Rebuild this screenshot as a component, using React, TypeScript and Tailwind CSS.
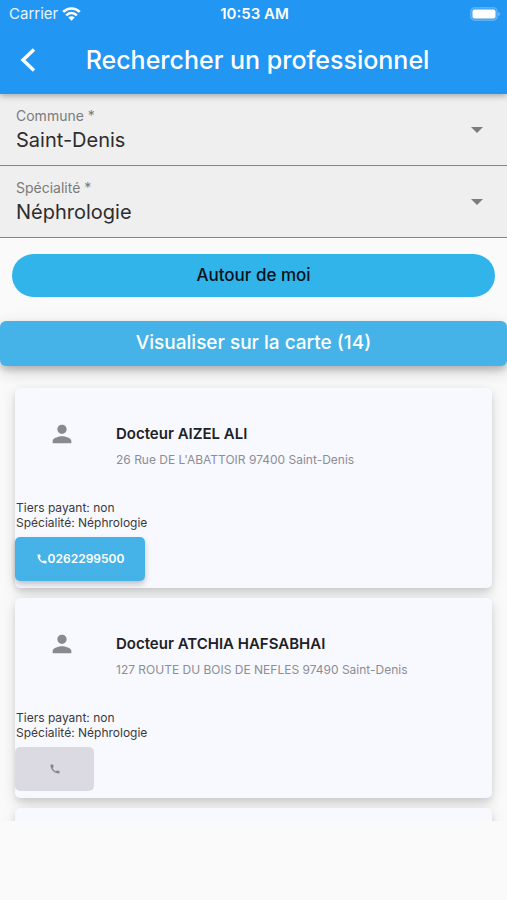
import { useId } from "react";
import { MdCall, MdPerson } from "react-icons/md";

type Doctor = { name: string; address: string; phone?: string };

const doctors: Doctor[] = [
  {
    name: "Docteur AIZEL ALI",
    address: "26 Rue DE L'ABATTOIR 97400 Saint-Denis",
    phone: "0262299500",
  },
  {
    name: "Docteur ATCHIA HAFSABHAI",
    address: "127 ROUTE DU BOIS DE NEFLES 97490 Saint-Denis",
  },
];

const cardClass =
  "h-[200px] shrink-0 rounded-[5px] bg-[#f8f9ff] shadow-[0_4px_6px_-1px_rgba(0,0,0,0.09),0_6px_12px_rgba(0,0,0,0.07),0_1px_18px_rgba(0,0,0,0.08)]";

function StatusBar() {
  return (
    <div className="grid h-7 grid-cols-3 items-center pr-[7px] pl-[9px] text-[15px] leading-5">
      <div className="flex items-center gap-1">
        <span className="text-white/90">Carrier</span>
        <svg width="19" height="14" viewBox="0 0 19 14" fill="none" stroke="white" aria-hidden="true">
          <path d="M1.2 4.9a11.8 11.8 0 0 1 16.6 0" strokeWidth="2.7" />
          <path d="M4.2 8.3a7.5 7.5 0 0 1 10.6 0" strokeWidth="2.5" />
          <path d="M9.5 13.8 6.3 10.6a4.5 4.5 0 0 1 6.4 0z" fill="white" stroke="none" />
        </svg>
      </div>
      <span className="text-center font-semibold whitespace-nowrap">10:53 AM</span>
      <svg className="justify-self-end" width="30" height="14" viewBox="0 0 30 14" aria-hidden="true">
        <rect x="0.7" y="0.7" width="26.6" height="12.6" rx="4" fill="white" fillOpacity="0.12" stroke="white" strokeOpacity="0.25" strokeWidth="1.2" />
        <rect x="2.5" y="2.5" width="23" height="9" rx="2" fill="white" />
        <path d="M28.5 5c1.6.6 1.6 3.4 0 4z" fill="white" fillOpacity="0.5" />
      </svg>
    </div>
  );
}

function SelectField({ label, value }: { label: string; value: string }) {
  const id = useId();
  return (
    <div className="grid h-[72px] border-b border-[#858585] bg-[#efefef]">
      <label
        htmlFor={id}
        className="pointer-events-none z-10 col-start-1 row-start-1 self-start px-4 pt-3 text-[14px] leading-5 text-[#7b7b7b]"
      >
        {label}
      </label>
      <select
        id={id}
        className="col-start-1 row-start-1 w-full appearance-none bg-transparent pt-5 pr-12 pl-4 text-[20px] leading-6 text-[#2d2d2d]"
      >
        <option>{value}</option>
      </select>
      <svg
        className="pointer-events-none col-start-1 row-start-1 mr-6 self-center justify-self-end"
        width="12"
        height="6"
        viewBox="0 0 12 6"
        aria-hidden="true"
      >
        <path d="M0 0h12L6 6z" fill="#7c7c7c" />
      </svg>
    </div>
  );
}

function DoctorCard({ doctor }: { doctor: Doctor }) {
  return (
    <article className={cardClass}>
      <div className="flex pt-8 pl-[33px]">
        <MdPerson className="size-7 shrink-0 text-[#8a8a8e]" aria-hidden="true" />
        <div className="pt-0.5 pl-10">
          <h2 className="text-[15px] leading-6 font-semibold text-[#202124]">{doctor.name}</h2>
          <p className="pt-1 text-[12px] leading-5 text-[#8d8d92]">{doctor.address}</p>
        </div>
      </div>
      <div className="pt-[30px] pl-px text-[12px] leading-[15px] text-[#3a3a3d]">
        <p>Tiers payant: non</p>
        <p>Spécialité: Néphrologie</p>
      </div>
      {doctor.phone ? (
        <button className="mt-[7px] flex h-11 w-[130px] items-center justify-center rounded-[5px] bg-[#45b3e8] text-[12px] font-semibold text-white shadow-[0_3px_5px_rgba(0,0,0,0.16),0_4px_8px_rgba(0,0,0,0.08)]">
          <MdCall className="size-3" aria-hidden="true" />
          {doctor.phone}
        </button>
      ) : (
        <button
          disabled
          aria-label="Appeler"
          className="mt-[7px] flex h-11 w-[79px] items-center justify-center rounded-[5px] bg-[#dbdae2] text-[#858489]"
        >
          <MdCall className="size-3" aria-hidden="true" />
        </button>
      )}
    </article>
  );
}

export default function App() {
  return (
    <div className="flex h-screen flex-col overflow-hidden bg-[#fafafa] font-['Inter','Liberation_Sans',sans-serif]">
      <header className="relative z-20 h-[94px] shrink-0 bg-[#2196f3] text-white shadow-[0_2px_6px_rgba(0,0,0,0.3)]">
        <StatusBar />
        <div className="grid h-16 grid-cols-[56px_1fr_48px] items-center">
          <button aria-label="Retour" className="flex h-12 items-center pl-5">
            <svg width="16" height="24" viewBox="0 0 16 24" fill="none" stroke="white" strokeWidth="3.4" aria-hidden="true">
              <path d="M14 1.5 3 12l11 10.5" />
            </svg>
          </button>
          <h1 className="text-center text-[25px] leading-8 font-medium whitespace-nowrap">
            Rechercher un professionnel
          </h1>
        </div>
      </header>
      <form className="flex shrink-0 flex-col">
        <SelectField label="Commune *" value="Saint-Denis" />
        <SelectField label="Spécialité *" value="Néphrologie" />
        <button
          type="button"
          className="mx-3 mt-4 h-[43px] rounded-full bg-[#31b4ea] text-[17px] font-medium text-[#071018]"
        >
          Autour de moi
        </button>
        <button
          type="button"
          className="mt-6 mb-[18px] h-[45px] rounded-md bg-[#45b3e8] text-[19px] font-medium text-white shadow-[0_4px_6px_rgba(0,0,0,0.18),0_6px_18px_rgba(0,0,0,0.16)]"
        >
          Visualiser sur la carte (14)
        </button>
      </form>
      <main className="relative flex min-h-0 flex-1 flex-col gap-[10px] overflow-hidden bg-[#fafafa] px-[15px] pt-1">
        {doctors.map((doctor) => (
          <DoctorCard key={doctor.name} doctor={doctor} />
        ))}
        <article className={cardClass} aria-hidden="true" />
      </main>
      <footer className="h-[79px] shrink-0" />
    </div>
  );
}
